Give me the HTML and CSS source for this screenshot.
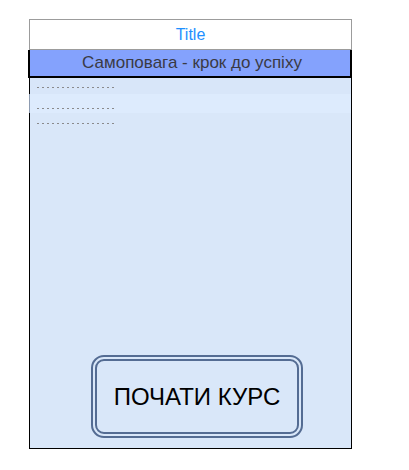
FILE: index.html
```html
<!DOCTYPE html>
<html>
<head>
<meta charset="utf-8">
<link rel="stylesheet" href="styles.css">
</head>
<body>
<div class="phone">
  <div class="title">Title</div>
  <div class="bar">Самоповага - крок до успіху</div>
  <div class="content">
    <div class="row row-a"><span class="dots"></span></div>
    <div class="row row-b"><span class="dots"></span></div>
    <div class="row row-c"><span class="dots"></span></div>
    <button class="start">ПОЧАТИ КУРС</button>
  </div>
</div>
</body>
</html>
```

FILE: styles.css
```css
html, body {
  margin: 0;
  padding: 0;
  background: #ffffff;
}
body {
  font-family: "Liberation Sans", Arial, sans-serif;
}
.phone {
  width: 323px;
  margin: 19px 0 0 29px;
  display: flex;
  flex-direction: column;
}
.title {
  box-sizing: border-box;
  height: 31px;
  border: 1px solid #9c9c9c;
  line-height: 29px;
  text-align: center;
  font-size: 16px;
  color: #1e90ff;
  background: #ffffff;
}
.bar {
  box-sizing: border-box;
  width: 324px;
  margin-left: -1px;
  height: 28px;
  border-left: 2px solid #000;
  border-right: 2px solid #000;
  border-bottom: 2px solid #000;
  background: #84a2fd;
  color: #3a3a44;
  font-size: 17px;
  line-height: 26px;
  text-align: center;
  padding-left: 4px;
}
.content {
  box-sizing: border-box;
  height: 371px;
  border: 1px solid #000;
  border-top: none;
  background: #d9e7f9;
  display: flex;
  flex-direction: column;
}
.row {
  box-sizing: border-box;
  padding-left: 7px;
}
.row-a {
  height: 16px;
  padding-top: 9px;
  background: #d8e6f9;
}
.row-b {
  height: 19px;
  padding-top: 14px;
  background: #ddebfd;
  margin-left: -1px;
  border-left: 1px solid #8d9bb0;
}
.row-c {
  height: 18px;
  padding-top: 10px;
}
.dots {
  display: block;
  width: 79px;
  height: 1px;
  background: repeating-linear-gradient(to right, #8a8a8c 0, #8a8a8c 2px, transparent 2px, transparent 5px);
}
.start {
  box-sizing: border-box;
  margin-top: auto;
  margin-bottom: 10px;
  margin-left: 61px;
  width: 212px;
  height: 83px;
  border: 6px double #546c93;
  border-radius: 13px;
  background: #d9e7f9;
  font-family: "Liberation Sans", Arial, sans-serif;
  font-size: 24px;
  color: #000;
  padding: 0;
}
```
